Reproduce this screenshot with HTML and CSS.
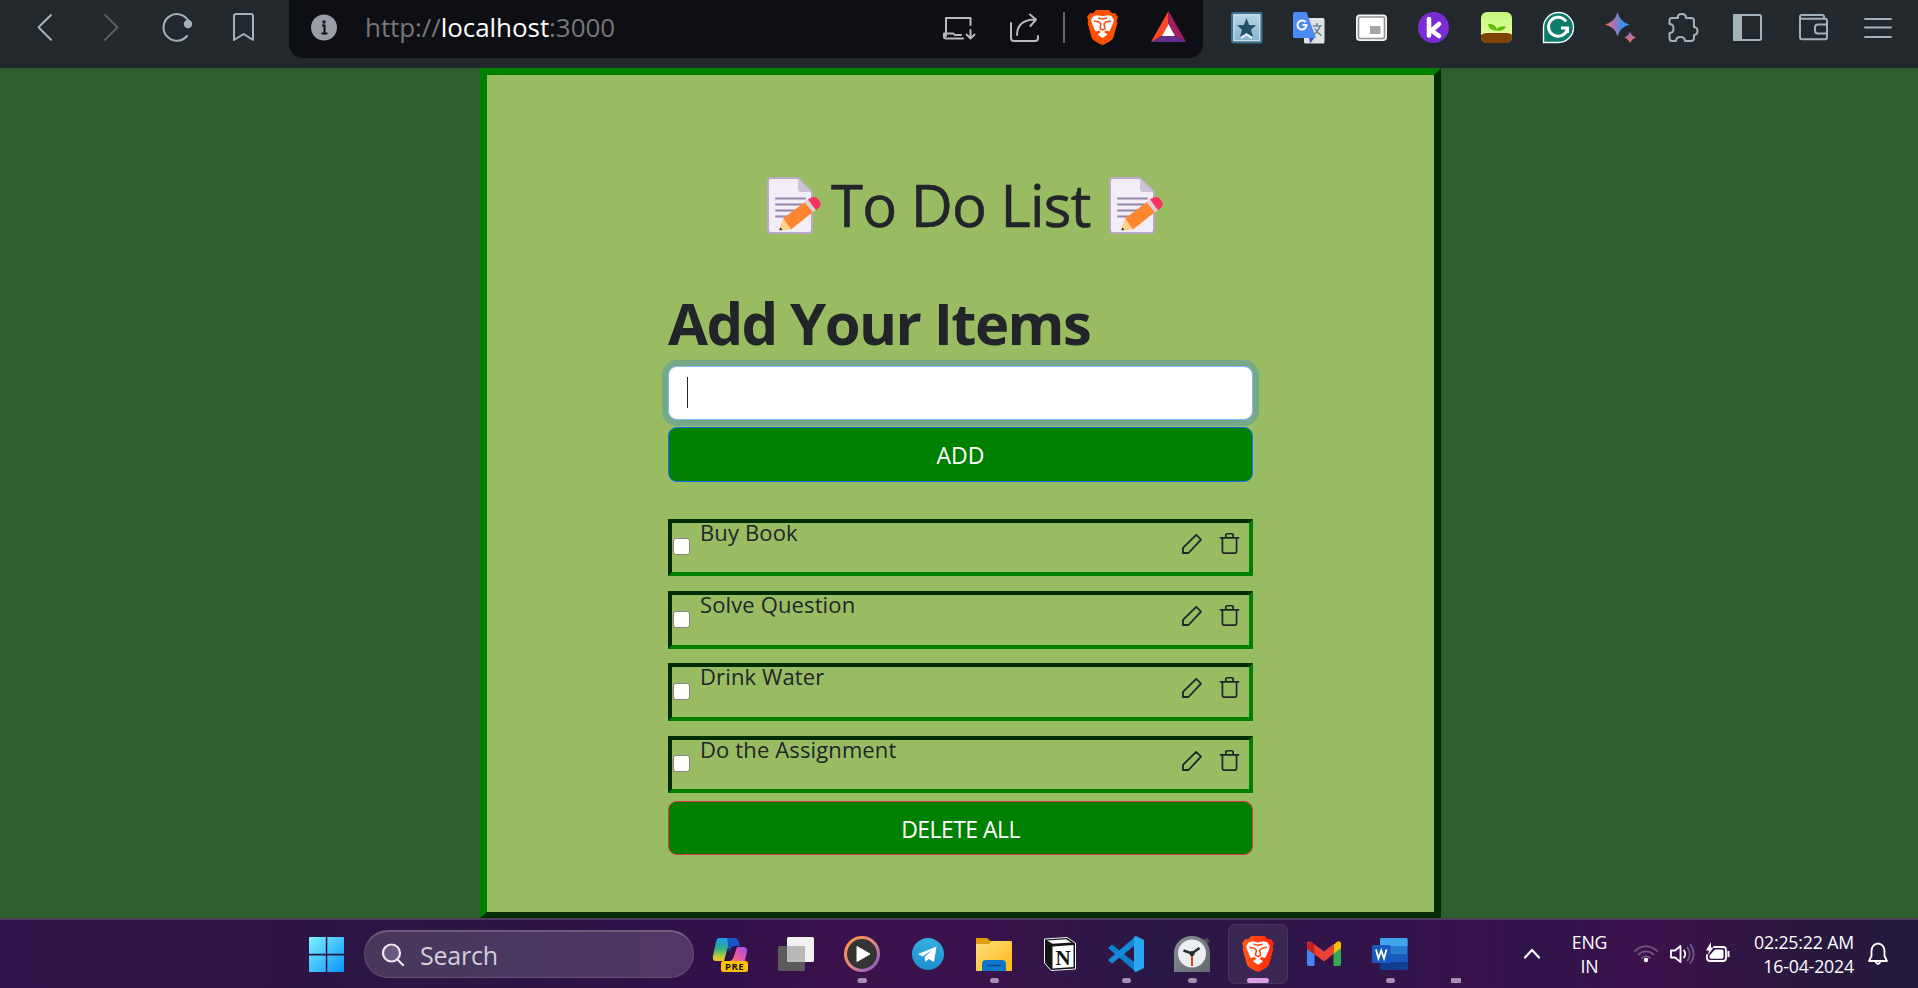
FILE: index.html
```html
<!DOCTYPE html>
<html lang="en">
<head>
<meta charset="utf-8">
<title>To Do List</title>
<link rel="stylesheet" href="styles.css">
</head>
<body>
<svg class="defs" aria-hidden="true">
  <defs>
    <linearGradient id="orange" x1="0" y1="0" x2="1" y2="0"><stop offset="0" stop-color="#ff5a16"/><stop offset="1" stop-color="#ff2508"/></linearGradient>
    <linearGradient id="win" x1="0" y1="0" x2="1" y2="1"><stop offset="0" stop-color="#7df0ff"/><stop offset="1" stop-color="#0a94fb"/></linearGradient>
    <linearGradient id="plant" x1="0" y1="0" x2="0" y2="1"><stop offset="0" stop-color="#c2f97c"/><stop offset="1" stop-color="#eefda5"/></linearGradient>
    <linearGradient id="spark" x1="0" y1="0" x2="1" y2="0"><stop offset="0" stop-color="#ff7a52"/><stop offset=".35" stop-color="#b06fb0"/><stop offset=".7" stop-color="#3c8fe8"/><stop offset="1" stop-color="#29a3ee"/></linearGradient>
    <linearGradient id="spark2" x1="0" y1="0" x2="0" y2="1"><stop offset="0" stop-color="#8a6fe0"/><stop offset="1" stop-color="#f67257"/></linearGradient>
    <linearGradient id="star" x1="0" y1="0" x2="0" y2="1"><stop offset="0" stop-color="#b9d7e8"/><stop offset="1" stop-color="#85b1cb"/></linearGradient>
    <linearGradient id="copL" x1="0" y1="0" x2="0" y2="1"><stop offset="0" stop-color="#1d9bf0"/><stop offset=".45" stop-color="#2fae8c"/><stop offset=".8" stop-color="#b8cf3c"/><stop offset="1" stop-color="#f6c51d"/></linearGradient>
    <linearGradient id="copR" x1="1" y1="0" x2="0" y2="1"><stop offset="0" stop-color="#9d4df2"/><stop offset=".5" stop-color="#ee5a9c"/><stop offset="1" stop-color="#ff9a4d"/></linearGradient>
    <linearGradient id="ring" x1="0" y1="0" x2="1" y2="1"><stop offset="0" stop-color="#ff9440"/><stop offset=".5" stop-color="#e58a80"/><stop offset="1" stop-color="#7c50d4"/></linearGradient>
    <linearGradient id="folder" x1="0" y1="0" x2="1" y2="1"><stop offset="0" stop-color="#ffe080"/><stop offset="1" stop-color="#fdb813"/></linearGradient>
    <linearGradient id="tele" x1="0" y1="0" x2="0" y2="1"><stop offset="0" stop-color="#35ade1"/><stop offset="1" stop-color="#1c8fcb"/></linearGradient>
    <linearGradient id="grey" x1="0" y1="0" x2="1" y2="1"><stop offset="0" stop-color="#8a9095"/><stop offset="1" stop-color="#63696e"/></linearGradient>
    <symbol id="lion" viewBox="0 0 31 35">
      <path d="M9 0H22L25 3.2 28 3 31 7 29.8 10.5 30.4 13 26.5 27C25.8 29.2 24.8 30 23 31.2L17 34.6Q15.5 35.4 14 34.6L8 31.2C6.2 30 5.2 29.2 4.5 27L.6 13 1.2 10.5 0 7 3 3 6 3.2Z"/>
      <path fill="#fff" d="M10.5 5.2 15.5 6.2 20.500 5.2 24.500 6 27 10 26 13.500 24.500 17 22.500 21.500 19 20.500 17 22 20.500 24.500 15.500 28 10.500 24.500 14 22 12 20.500 8.500 21.500 6.500 17 5 13.500 4 10 6.500 6Z"/>
      <path class="lion-line" d="M7 11 12 12 14 14 13 18M24 11 19 12 17 14 18 18M12.500 18.500 15.500 20 18.500 18.500M11 8 15.500 9 20 8"/>
    </symbol>
    <symbol id="memo" viewBox="0 0 56 60">
      <path d="M4 2H31L45 16V54Q45 57 42 57H4Q1 57 1 54V5Q1 2 4 2Z" fill="#f3edf8" stroke="#b9a9c6" stroke-width="2"/>
      <path d="M31 2 45 16H34Q31 16 31 13Z" fill="#cdc2d6"/>
      <path d="M9 22.500H38M9 28.500H35M9 34.500H29M9 40.500H22" stroke="#9484a5" stroke-width="1.800" stroke-linecap="round"/>
      <path d="M38 26 46 36 24 53.500 16 42.500Z" fill="#ff8530"/>
      <path d="M16 42.500 24 53.500 13 54.500 12.500 53Z" fill="#ffcf85"/>
      <path d="M13 51.500 15.500 53.500 12.500 54.500Z" fill="#23262a"/>
      <path d="M37.500 26 41 23.500 49 34 46 36.500Z" fill="#d9d2d7"/>
      <path d="M41 23.500C45 20 49 20 52 24 55 28.500 54 31 49 34Z" fill="#fb3360"/>
    </symbol>
    <symbol id="pencil" viewBox="0 0 22 22">
      <path d="M15.200 1.800 20 6.600 7.500 20H2V14.800Z" />
    </symbol>
    <symbol id="trash" viewBox="0 0 22 24">
      <path d="M1.500 6H20.500M7.200 6V3.200Q7.200 1.800 8.600 1.800H13.400Q14.800 1.800 14.800 3.200V6M3.600 6V20.500Q3.600 22 5.100 22H16.900Q18.400 22 18.400 20.500V6"/>
    </symbol>
  </defs>
</svg>

<header class="toolbar">
  <svg class="line" width="80" height="56" viewBox="0 0 80 56"><path d="M51 15 38.500 27.300 51 39.700"/></svg>
  <svg class="line dim" width="60" height="56" viewBox="80 0 60 56"><path d="M105 15 117.500 27.300 105 39.700"/></svg>
  <svg class="line" width="75" height="56" viewBox="140 0 75 56"><path d="M187 36A13.300 13.300 0 1 1 188.500 21"/><circle class="solid" cx="188" cy="24" r="3.200"/></svg>
  <svg class="line" width="74" height="56" viewBox="215 0 74 56"><path d="M236 14H251Q253 14 253 16V40L243.600 34 234 40V16Q234 14 236 14Z"/></svg>
  <div class="address">
    <svg width="76" height="58" viewBox="289 0 76 58"><circle cx="324" cy="27.500" r="13" fill="#9b9ea6"/><path d="M322 25.500H324.500V33M321.500 33.500H327.500" stroke="#101117" stroke-width="2" fill="none"/><rect x="322.500" y="20.500" width="3" height="3" fill="#101117"/></svg>
    <span class="url">http://<b>localhost</b>:3000</span>
    <svg class="line pale" width="56" height="58" viewBox="932 0 56 58"><path d="M970.500 25V18H946V36M970.500 30V38M966.500 34.500 970.500 38.500 974.500 34.500M944 33.500H953L955 35H961M944 33.500V36.500Q944 38.500 946 38.500H963"/></svg>
    <svg class="line pale" width="75" height="58" viewBox="988 0 75 58"><path d="M1011 23V38Q1011 41 1014 41H1035Q1038 41 1038 38V36M1017 35Q1017 20 1035 19.500M1030 14.500 1036 19.500 1030.500 26"/></svg>
    <i class="divider"></i>
    <svg width="66" height="58" viewBox="1065 0 66 58"><use href="#lion" x="1087" y="10" width="31" height="35" fill="#ff5000"/></svg>
    <svg width="72" height="58" viewBox="1131 0 72 58"><path d="M1168.500 11V24L1162 36 1151 42Z" fill="#ff4724"/><path d="M1168.500 11 1186 42 1175 36 1168.500 24Z" fill="#9e1f63"/><path d="M1151 42H1186L1175 36H1162Z" fill="#662d91"/><path d="M1168.500 24 1175 36H1162Z" fill="#fff"/></svg>
  </div>
  <svg width="74" height="56" viewBox="1203 0 74 56"><rect x="1232" y="13" width="29.500" height="29.500" rx="1.500" fill="url(#star)" stroke="#416f8c" stroke-width="2"/><rect x="1234" y="15" width="25.500" height="25.500" fill="none" stroke="#c6dfeb" stroke-width="1"/><path d="M1246.500 18 1249.200 25 1256 25.200 1251 29.800 1253 37 1246.500 33 1240 37 1242 29.800 1237 25.200 1243.800 25Z" fill="#264f68"/><path d="M1241 38 1246.500 34.500 1252 38" stroke="#e5f1f7" stroke-width="2" fill="none"/></svg>
  <svg width="64" height="56" viewBox="1277 0 64 56"><rect x="1304" y="18" width="20.500" height="25.500" rx="1.500" fill="#dfe1e4"/><path d="M1309 37 1315 37 1310 43.500Z" fill="#3353b8"/><path d="M1294.500 12H1306.500L1316 38H1294.500Q1293 38 1293 36.500V13.500Q1293 12 1294.500 12Z" fill="#4c8bf5"/><path d="M1313 26H1322M1317 23V26M1320 26Q1318 32 1313.500 34.500M1315 28.500Q1317 33 1321.500 35.500" stroke="#6f8590" stroke-width="1.600" fill="none"/><path d="M1305.500 22.200A4.500 4.500 0 1 0 1306.500 25H1302.500" stroke="#fff" stroke-width="2" fill="none"/></svg>
  <svg width="62" height="56" viewBox="1341 0 62 56"><rect x="1356" y="14.500" width="31" height="26.500" rx="4" fill="#f4f4f4"/><rect x="1358.500" y="17" width="26" height="21.500" rx="1.500" fill="#fff" stroke="#919191" stroke-width="1.600"/><rect x="1370" y="26" width="10.500" height="8" fill="#a6a6a6"/></svg>
  <svg width="64" height="56" viewBox="1403 0 64 56"><circle cx="1433.500" cy="27.500" r="15.500" fill="#7a2bd2"/><path d="M1429 19V35.500M1439 24 1431.500 30.500 1439 36" stroke="#fff" stroke-width="4.600" stroke-linecap="round" stroke-linejoin="round" fill="none"/></svg>
  <svg width="62" height="56" viewBox="1467 0 62 56"><rect x="1481" y="12" width="31" height="31" rx="6" fill="url(#plant)"/><path d="M1481 35Q1484 32.500 1488 33H1506Q1510 32.500 1512 35V37Q1512 43 1506 43H1487Q1481 43 1481 37Z" fill="#7d4206"/><path d="M1497 34.500V30.500Q1489 31 1488 24Q1495 23.500 1497 29Q1499 25.500 1506 26.500Q1503 32 1497 30.500" fill="#5fbe08"/></svg>
  <svg width="61" height="56" viewBox="1529 0 61 56"><path d="M1543.500 42.500V27.500A15 15 0 1 1 1558.500 42.500Z" fill="#0b7c6b" stroke="#f5fffd" stroke-width="1.400"/><path d="M1566 21.500A9.500 9.500 0 1 0 1567.500 28H1561M1567.500 28V33" stroke="#fff" stroke-width="3" fill="none"/></svg>
  <svg width="65" height="56" viewBox="1590 0 65 56"><path d="M1617.500 12Q1620 22 1629.500 24.500 1620 27 1617.500 36.500 1615 27 1605 24.500 1615 22 1617.500 12Z" fill="url(#spark)"/><path d="M1630 31.500Q1631.500 36 1636 37.500 1631.500 39 1630 43 1628.500 39 1624.500 37.500 1628.500 36 1630 31.500Z" fill="url(#spark2)"/></svg>
  <svg class="line" width="62" height="56" viewBox="1655 0 62 56"><path d="M1672 18H1678Q1677 14 1682 14 1686 14 1686 18H1691Q1694 18 1694 21V27Q1697.500 27.500 1697.500 31 1697.500 34.500 1694 35V38Q1694 41 1691 41H1685Q1685 37 1680.500 37 1676 37 1676 41H1672Q1669.500 41 1669.500 38V33Q1673.500 33 1673.500 28.500 1673.500 24 1669.500 24V20Q1669.500 18 1672 18Z"/></svg>
  <svg class="line" width="62" height="56" viewBox="1717 0 62 56"><rect x="1734" y="15" width="27" height="25" rx="1.500"/><path class="solid" d="M1734 15H1741V40H1734Z"/></svg>
  <svg class="line" width="66" height="56" viewBox="1779 0 66 56"><path d="M1824 18.500V17Q1824 15 1822 15H1802Q1800 15 1800 17V37Q1800 39.300 1802 39.300H1825Q1827 39.300 1827 37V21Q1827 18.700 1825 18.700H1802Q1800 18.700 1800 16.500M1827 24.500H1818Q1815 24.500 1815 27.500V30.500Q1815 33.500 1818 33.500H1827"/></svg>
  <svg class="line" width="73" height="56" viewBox="1845 0 73 56"><path d="M1865 19H1891M1865 27.600H1891M1865 37H1891"/></svg>
</header>

<main class="page">
  <section class="panel">
    <h1 class="title"><svg width="56" height="60"><use href="#memo"/></svg><span>To Do List</span><svg width="56" height="60"><use href="#memo"/></svg></h1>
    <div class="content">
      <h1 class="subtitle">Add Your Items</h1>
      <div class="field"><i class="caret"></i></div>
      <button class="btn add">ADD</button>
      <ul class="items">
        <li><i class="check"></i><span>Buy Book</span><svg class="pen"><use href="#pencil"/></svg><svg class="bin"><use href="#trash"/></svg></li>
        <li><i class="check"></i><span>Solve Question</span><svg class="pen"><use href="#pencil"/></svg><svg class="bin"><use href="#trash"/></svg></li>
        <li><i class="check"></i><span>Drink Water</span><svg class="pen"><use href="#pencil"/></svg><svg class="bin"><use href="#trash"/></svg></li>
        <li><i class="check"></i><span>Do the Assignment</span><svg class="pen"><use href="#pencil"/></svg><svg class="bin"><use href="#trash"/></svg></li>
      </ul>
      <button class="btn delete">DELETE ALL</button>
    </div>
  </section>
</main>

<footer class="taskbar">
  <svg class="start" width="55" height="68" viewBox="309 920 55 68"><path fill="url(#win)" d="M310 937H325.800V953.800H309V938Q309 937 310 937ZM327.300 937H343Q344 937 344 938V953.800H327.300ZM309 955.500H325.800V972H310Q309 972 309 971ZM327.300 955.500H344V971Q344 972 343 972H327.300Z"/></svg>
  <div class="search"><svg width="22" height="24" viewBox="0 0 22 24"><circle cx="9.500" cy="10" r="8.500"/><path d="M15.500 16.500 21 22"/></svg><span>Search</span></div>
  <svg width="69" height="68" viewBox="694 920 69 68"><path d="M719 938H731Q734 938 735.500 941L737 946H732Q728 946 727 950L724 961H716Q712 961 713 956L716 942Q717 938 719 938Z" fill="url(#copL)"/><path d="M727 938H734Q737 938 738.500 941L740 946H734Q731 946 729 952Z" fill="#1954cf"/><path d="M737 947H743Q748 947 747 952L744 964Q743 968 738 968H728L731 960Q733 960 734 956Z" fill="url(#copR)"/><rect x="721" y="961" width="27" height="11" rx="2.500" fill="#fdc009"/><text class="pre" x="734.500" y="970.300">PRE</text></svg>
  <svg width="66" height="68" viewBox="763 920 66 68"><rect x="787" y="937" width="27" height="25" rx="1.500" fill="#f1f1f1"/><rect x="778" y="946" width="27" height="25" rx="1.500" fill="#5b5b5e"/><path d="M787 946H805V962H787Z" fill="#b9b9ba"/></svg>
  <svg width="66" height="68" viewBox="829 920 66 68"><circle cx="862" cy="954" r="16.500" fill="#343434" stroke="url(#ring)" stroke-width="3"/><path d="M857 946.500 870 954 857 961.500Z" fill="#fff" stroke="#fff" stroke-linejoin="round"/><rect class="dot" x="857.500" y="978" width="9.500" height="5" rx="2.500"/></svg>
  <svg width="66" height="68" viewBox="895 920 66 68"><circle cx="928" cy="954" r="16" fill="url(#tele)"/><path d="M918 954 936.500 946.500 934 962 928.500 959 925.500 962 924.500 957 932.500 950 922.500 956.500Z" fill="#fff"/></svg>
  <svg width="66" height="68" viewBox="961 920 66 68"><path d="M976 939Q976 938 977 938H987L991 941.500V946H976Z" fill="#dfa005"/><path d="M976 944H989L991 941H1011Q1012 941 1012 942V971H976Z" fill="url(#folder)"/><path d="M982 971V964Q982 960 986 960H1002Q1006 960 1006 964V971Z" fill="#0f76c9"/><path d="M987 965.500H1001" stroke="#094c86" stroke-width="1.500"/><rect class="dot" x="990" y="978" width="9" height="5" rx="2.500"/></svg>
  <svg width="66" height="68" viewBox="1027 920 66 68"><path d="M1044.500 939 1067 937.500 1075.500 943V969L1051 970.500 1044.500 963Z" fill="#141414" stroke="#f5f5f5"/><path d="M1047 940.500 1066 939.300 1071.500 942.500 1052.500 943.800Z" fill="#fff"/><path d="M1052.500 946.500 1073.500 945V967L1052.500 968.500Z" fill="#fff"/><text class="notion" x="1063" y="964.500">N</text></svg>
  <svg width="66" height="68" viewBox="1093 920 66 68"><path d="M1108 948 1112 944.500 1136 963.500V972Z" fill="#0d80cc"/><path d="M1108 960 1112 963.500 1136 944.500V936Z" fill="#1389d8"/><path d="M1136 936 1144 940V968L1136 972 1134 971V937Z" fill="#29a6f2"/><rect class="dot" x="1122" y="978" width="9" height="5" rx="2.500"/></svg>
  <svg width="69" height="68" viewBox="1159 920 69 68"><path d="M1203 940 1207 937.500 1210 941.500 1206 945Z" fill="#4d4d4d"/><path d="M1174 972V953A18 17 0 0 1 1210 953V972Z" fill="url(#grey)"/><circle cx="1192" cy="953.500" r="14" fill="#eceeef"/><path d="M1183.500 950.500 1192 953.500 1199.500 948" stroke="#242b31" stroke-width="2.400" fill="none"/><path d="M1192 954V966" stroke="#cf4520" stroke-width="2"/><circle cx="1192" cy="953.500" r="2.500" fill="#242b31"/><rect class="dot" x="1188" y="978" width="9" height="5" rx="2.500"/></svg>
  <div class="active"><svg width="58" height="58" viewBox="1229 925 58 58"><use href="#lion" x="1242" y="936" width="32" height="36" fill="url(#orange)"/><rect x="1247" y="978" width="22" height="5" rx="2.500" fill="#dda0e6"/></svg></div>
  <svg width="69" height="68" viewBox="1288 920 69 68"><path d="M1307 942V964Q1307 966 1309 966H1314.500V949Z" fill="#4285f4"/><path d="M1341 942V964Q1341 966 1339 966H1333.500V949Z" fill="#34a853"/><path d="M1333.500 945 1337 941.800Q1341 940 1341 945V948L1333.500 954Z" fill="#fbbc04"/><path d="M1307 947V943.500Q1308 940 1312 942.500L1324 951.500 1333.500 944V954L1324 961.500 1307 948.500Z" fill="#ea4335"/><path d="M1307 949V945Q1308 940.500 1312 942.500L1314.500 944.500V954.500Z" fill="#c5221f"/></svg>
  <svg width="66" height="68" viewBox="1357 920 66 68"><rect x="1380" y="938" width="27.500" height="32" rx="1.500" fill="#2b7cd3"/><path d="M1380 939.500Q1380 938 1381.500 938H1406Q1407.500 938 1407.500 939.500V946H1380Z" fill="#41a5ee"/><path d="M1380 954H1407.500V962H1380Z" fill="#185abd"/><path d="M1380 962H1407.500V968.500Q1407.500 970 1406 970H1381.500Q1380 970 1380 968.500Z" fill="#103f91"/><rect x="1372" y="945" width="18.500" height="18" rx="1.500" fill="#185abd"/><path d="M1376 949.500 1378.400 958.500 1381.200 950.500 1384 958.500 1386.500 949.500" stroke="#fff" stroke-width="1.800" fill="none"/><rect class="dot" x="1386" y="978" width="9" height="5" rx="2.500"/></svg>
  <svg width="88" height="68" viewBox="1423 920 88 68"><rect class="dot" x="1451" y="978" width="10" height="5" rx="1"/></svg>
  <svg class="tray" width="49" height="68" viewBox="1511 920 49 68"><path stroke-width="2.200" d="M1525 957.500 1532 950 1539 957.500"/></svg>
  <div class="lang"><span>ENG</span><span>IN</span></div>
  <svg class="tray" width="136" height="68" viewBox="1619 920 136 68">
    <path class="faint" d="M1635 951A15.500 15.500 0 0 1 1657 951M1638.500 954.500A10.500 10.500 0 0 1 1653.500 954.500M1642 958A5.800 5.800 0 0 1 1650 958"/><circle cx="1646" cy="960" r="2.200" fill="#fff" stroke="none"/>
    <path d="M1671 950.500H1675L1680.500 946V962L1675 957.500H1671ZM1684 950.500Q1686.500 954 1684 957.500"/><path class="faint" d="M1687.500 947.500Q1692 954 1687.500 960.500M1690.500 944.500Q1697 954 1690.500 963"/>
    <path d="M1714 947H1723Q1726 947 1726 950V958Q1726 961 1723 961H1710Q1707 961 1707 958V955"/><path d="M1715 949.500H1722Q1723.500 949.500 1723.500 951V957Q1723.500 958.700 1722 958.700H1711Q1709.500 958.700 1709.500 957V955.500ZM1711 942 1706 950.500H1709L1708 955 1713.500 947.500H1711ZM1727.500 951H1729.500V957H1727.500Z" fill="#fff" stroke="none"/>
  </svg>
  <div class="clock"><span>02:25:22 AM</span><span>16-04-2024</span></div>
  <svg class="tray" width="64" height="68" viewBox="1854 920 64 68"><path d="M1869 961 1871.500 956V951A6.500 7.500 0 0 1 1884.500 951V956L1887 961ZM1875.500 961.500Q1878 966.500 1880.500 961.500"/></svg>
</footer>
</body>
</html>
```

FILE: styles.css
```css
* { box-sizing: border-box; }
html, body { margin: 0; height: 988px; overflow: hidden; }
body {
  display: flex;
  flex-direction: column;
  background: #2d5f2e;
  color: #212529;
  font-family: "Open Sans", "Noto Sans", sans-serif;
}
svg { display: block; flex: none; }
.defs { position: absolute; width: 0; height: 0; }
.lion-line { fill: none; stroke: #fb4a12; stroke-width: 1.5; }

.toolbar { display: flex; flex: none; height: 68px; background: #23282c; }
.line { fill: none; stroke: #a3b2ba; stroke-width: 2; stroke-linecap: round; stroke-linejoin: round; }
.line .solid { fill: #a3b2ba; }
.line.dim { stroke: #566065; }
.line.pale { stroke: #b9babb; }
.address {
  display: flex;
  width: 914px;
  height: 58px;
  background: #0e0f14;
  border-radius: 0 0 14px 14px;
}
.url { flex: 1; color: #75777b; font-size: 26px; line-height: 54px; letter-spacing: -.07px; white-space: nowrap; }
.url b { color: #fff; font-weight: 400; }
.divider { width: 2px; height: 31px; margin-top: 12px; background: #66686c; }

.page { display: flex; justify-content: center; flex: none; height: 850px; }
.panel {
  width: 961px;
  height: 850px;
  margin-left: 3px;
  border: 7px outset green;
  border-bottom-width: 6px;
  background: #99bc62;
}
.title {
  display: flex;
  height: 60px;
  margin: 101px 0 0 280px;
  font-size: 58px;
  font-weight: 500;
  line-height: 58px;
  letter-spacing: -.75px;
  white-space: nowrap;
  -webkit-text-stroke: .6px #212529;
}
.title span { width: 286px; padding-left: 8px; }
.content { display: flex; flex-direction: column; width: 585px; margin-left: 181px; }
.subtitle {
  height: 130px;
  margin: 0;
  padding-top: 55px;
  font-size: 58px;
  font-weight: 700;
  line-height: 64px;
  letter-spacing: -1.6px;
  white-space: nowrap;
}
.field {
  height: 54px;
  padding: 10px 18px;
  border: 1px solid #86b7fe;
  border-radius: 9px;
  background: #fff;
  box-shadow: 0 0 0 6px rgba(13, 110, 253, .25);
}
.caret { display: block; width: 1px; height: 31px; background: #212529; }
.btn {
  height: 55px;
  padding: 2px 0 0;
  border: 1px solid #0d6efd;
  border-radius: 9px;
  background: green;
  color: #fff;
  font: 400 23px/51px "Open Sans", sans-serif;
}
.add { margin-top: 7px; }
.delete { height: 54px; margin-top: 7.8px; border-color: #dc3545; letter-spacing: -.55px; }
.items { display: grid; gap: 14.75px; margin: 36.9px 0 0; padding: 0; list-style: none; }
.items li { display: flex; height: 57.5px; border: 4px inset green; font-size: 22px; line-height: 28px; letter-spacing: .13px; white-space: nowrap; }
.items span { flex: 1; margin: -5px 0 0 11px; }
.check { width: 17px; height: 17px; margin: 15.5px -.5px 0 .5px; border: 1.5px solid #858585; border-radius: 3px; background: #fff; }
.pen, .bin { fill: none; stroke: #212529; stroke-width: 1.8; stroke-linejoin: round; stroke-linecap: round; }
.pen { width: 22px; height: 22px; margin: 10px 16px 0 0; }
.bin { width: 21px; height: 23px; margin: 9px 9px 0 0; }

.taskbar {
  display: flex;
  flex: none;
  height: 70px;
  border-top: 2px solid #4d3a5d;
  background: linear-gradient(90deg, #301449 0, #2a1644 24%, #301149 37%, #3c124c 45%, #3c124c 50%, #2a1846 60%, #30144a 70%, #38124c 77%, #30144b 80%, #3c114b 86%, #2b173f 93%, #231a3c 100%);
}
.start { margin-left: 309px; }
.search {
  display: flex;
  align-items: center;
  width: 330px;
  height: 48px;
  margin-top: 10px;
  padding-left: 17px;
  border: 1px solid #634e75;
  border-top: 2px solid #6f5d80;
  border-radius: 24px;
  background: linear-gradient(90deg, #47385b, #493860 50%, #513768);
  color: #d3ccda;
  font-size: 25px;
  letter-spacing: -.2px;
}
.search svg { margin-right: 16px; fill: #6b5a7d; stroke: #ece8ef; stroke-width: 2.2; stroke-linecap: round; }
.pre { font: 700 9.5px "Open Sans", sans-serif; text-anchor: middle; fill: #161616; letter-spacing: .4px; }
.notion { font: 700 21px "Liberation Serif", serif; text-anchor: middle; fill: #111; }
.dot { fill: #a58fb0; }
.active { width: 60px; height: 60px; margin-top: 4px; border: 1px solid #4a3560; border-radius: 7px; background: #3b2753; }
.tray { fill: none; stroke: #fff; stroke-width: 1.8; stroke-linejoin: round; stroke-linecap: round; }
.faint { stroke: #725780; }
.lang, .clock { display: flex; flex-direction: column; padding-top: 11px; color: #fff; font-size: 17.7px; line-height: 23.5px; white-space: nowrap; }
.lang { width: 59px; align-items: center; letter-spacing: -.2px; }
.clock { width: 99px; align-items: flex-end; letter-spacing: -.15px; }
```
